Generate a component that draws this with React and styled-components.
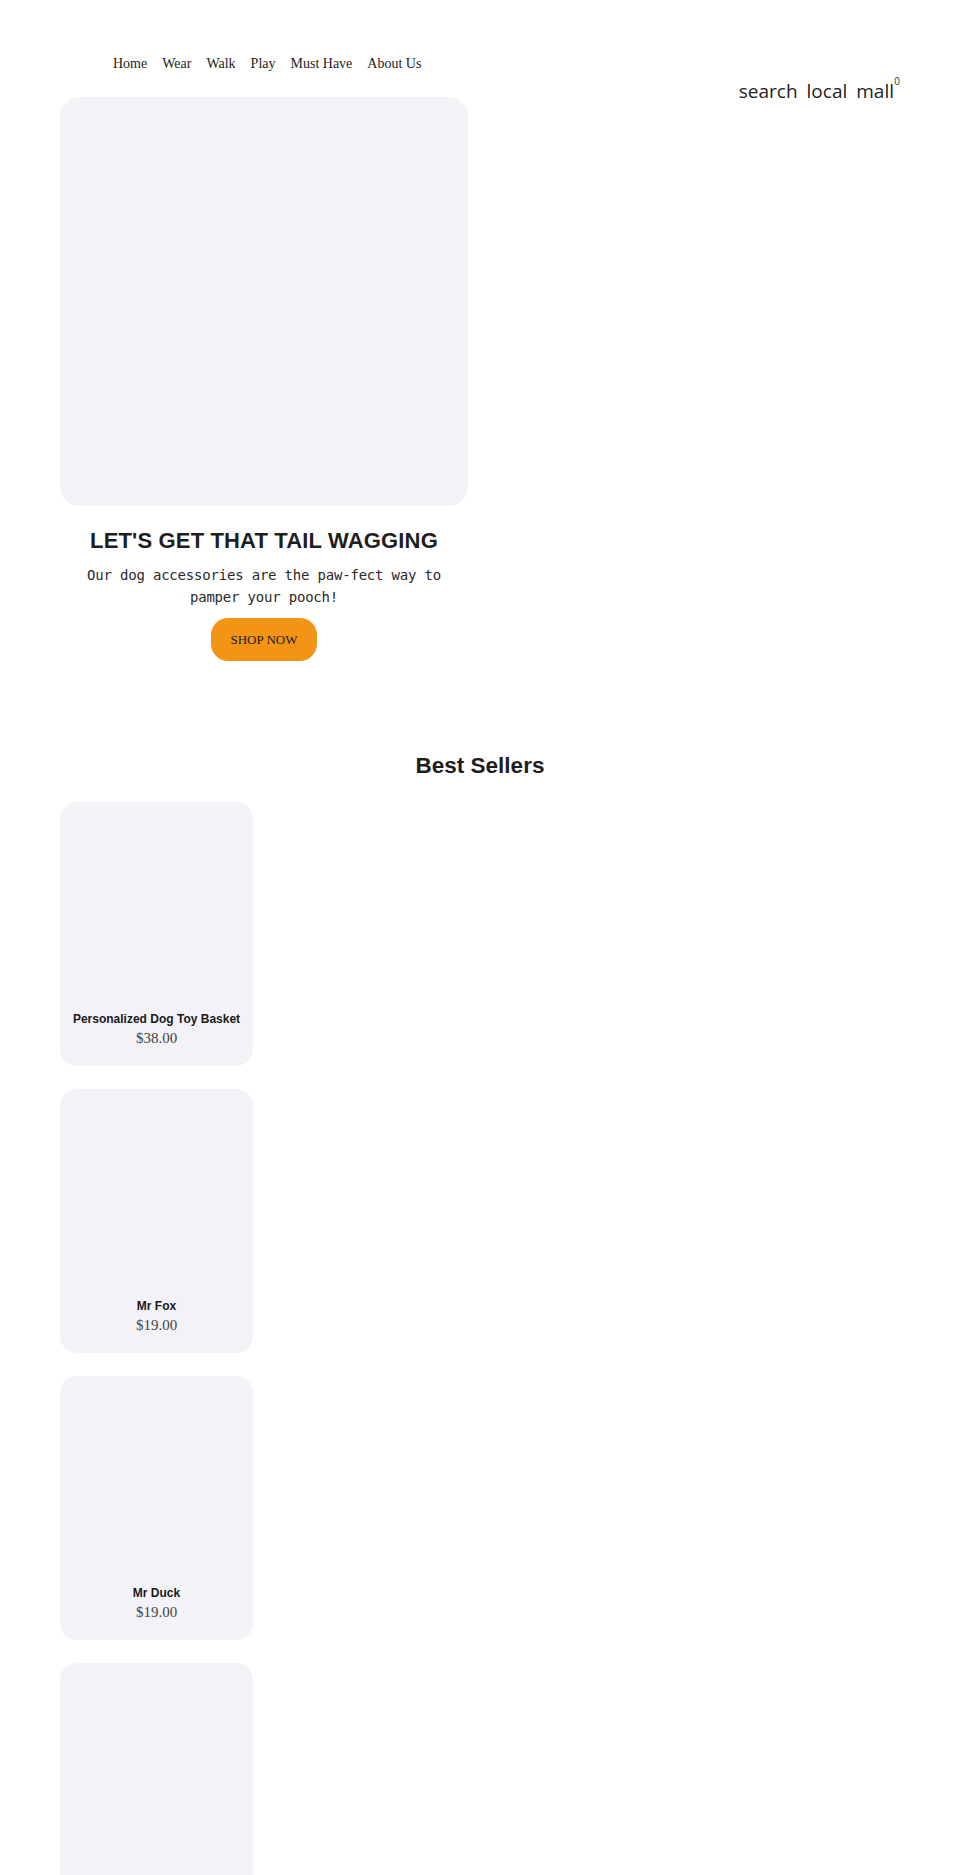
import React from "react";
import styled, { createGlobalStyle } from "styled-components";

const GlobalStyle = createGlobalStyle`
  html, body {
    margin: 0;
    padding: 0;
    background: #ffffff;
  }
  body {
    font-family: "Liberation Sans", Arial, sans-serif;
    color: #1f1f1f;
  }
  * { box-sizing: border-box; }
`;

const Page = styled.div`
  padding: 56px 60px 40px;
`;

const Top = styled.div`
  display: grid;
  grid-template-columns: 408px 1fr;
`;

const MainColumn = styled.div`
  display: flex;
  flex-direction: column;
`;

const Nav = styled.nav`
  display: flex;
  gap: 15px;
  padding-left: 53px;
  height: 16px;
  margin-bottom: 25px;
`;

const NavLink = styled.a`
  font-family: "Liberation Serif", "Times New Roman", serif;
  font-size: 14px;
  line-height: 16px;
  color: #1c1c1c;
  text-decoration: none;
  white-space: nowrap;
`;

const Actions = styled.div`
  justify-self: end;
  display: flex;
  gap: 9px;
  margin-top: 22px;
  margin-right: 6px;
  align-self: start;
`;

const ActionIcon = styled.span`
  position: relative;
  font-family: "Open Sans", "Noto Sans", sans-serif;
  font-size: 19px;
  line-height: 26px;
  color: #222222;
`;

const CartCount = styled.span`
  position: absolute;
  top: -3px;
  right: -6px;
  font-family: "Open Sans", sans-serif;
  font-size: 10px;
  line-height: 12px;
  color: #333333;
`;

const Media = styled.div`
  width: 408px;
  height: 409px;
  border-radius: 20px;
  background: #f3f2f7;
`;

const HeroText = styled.div`
  display: flex;
  flex-direction: column;
  align-items: center;
  text-align: center;
  padding: 22px 18px 0;
`;

const HeroTitle = styled.h1`
  margin: 0;
  font-family: "Liberation Sans", Arial, sans-serif;
  font-weight: 700;
  font-size: 22px;
  line-height: 26px;
  letter-spacing: 0.15px;
  color: #1e1e1e;
`;

const HeroLead = styled.p`
  margin: 10px 0 0;
  font-family: "DejaVu Sans Mono", "Liberation Mono", monospace;
  font-size: 14px;
  line-height: 22px;
  letter-spacing: -0.2px;
  color: #2a2a2a;
`;

const ShopButton = styled.a`
  margin-top: 10px;
  display: inline-flex;
  align-items: center;
  justify-content: center;
  width: 106px;
  height: 43px;
  border-radius: 17px;
  background: #f39417;
  font-family: "Liberation Serif", "Times New Roman", serif;
  font-size: 13px;
  color: #1d1b16;
  text-decoration: none;
`;

const Section = styled.section`
  margin-top: 92px;
  display: flex;
  flex-direction: column;
`;

const SectionTitle = styled.h2`
  margin: 0 0 23px;
  text-align: center;
  font-family: "Liberation Sans", Arial, sans-serif;
  font-weight: 700;
  font-size: 22.5px;
  line-height: 26px;
  color: #1e1e1e;
`;

const ProductList = styled.div`
  display: flex;
  flex-direction: column;
  gap: 23px;
`;

const ProductCard = styled.a`
  width: 193px;
  height: 264px;
  border-radius: 17px;
  background: #f3f2f7;
  display: flex;
  flex-direction: column;
  justify-content: flex-end;
  align-items: center;
  padding: 0 6px 18px;
  text-decoration: none;
`;

const ProductName = styled.div`
  margin-bottom: 1px;
  font-family: "Liberation Sans", Arial, sans-serif;
  font-weight: 700;
  font-size: 12px;
  line-height: 16px;
  color: #1a1a1a;
  text-align: center;
`;

const ProductPrice = styled.div`
  font-family: "Liberation Serif", "Times New Roman", serif;
  font-size: 15px;
  line-height: 20px;
  color: #444444;
`;

const navItems = ["Home", "Wear", "Walk", "Play", "Must Have", "About Us"];

const products = [
  { name: "Personalized Dog Toy Basket", price: "$38.00" },
  { name: "Mr Fox", price: "$19.00" },
  { name: "Mr Duck", price: "$19.00" },
  { name: "Mr Bear", price: "$19.00" },
];

export default function App() {
  return (
    <>
      <GlobalStyle />
      <Page>
        <Top>
          <MainColumn>
            <Nav>
              {navItems.map((item) => (
                <NavLink key={item} href="#">
                  {item}
                </NavLink>
              ))}
            </Nav>
            <Media />
            <HeroText>
              <HeroTitle>LET'S GET THAT TAIL WAGGING</HeroTitle>
              <HeroLead>
                Our dog accessories are the paw-fect way to pamper your pooch!
              </HeroLead>
              <ShopButton href="#">SHOP NOW</ShopButton>
            </HeroText>
          </MainColumn>
          <Actions>
            <ActionIcon>search</ActionIcon>
            <ActionIcon>local</ActionIcon>
            <ActionIcon>
              mall
              <CartCount>0</CartCount>
            </ActionIcon>
          </Actions>
        </Top>
        <Section>
          <SectionTitle>Best Sellers</SectionTitle>
          <ProductList>
            {products.map((p) => (
              <ProductCard key={p.name} href="#">
                <ProductName>{p.name}</ProductName>
                <ProductPrice>{p.price}</ProductPrice>
              </ProductCard>
            ))}
          </ProductList>
        </Section>
      </Page>
    </>
  );
}
